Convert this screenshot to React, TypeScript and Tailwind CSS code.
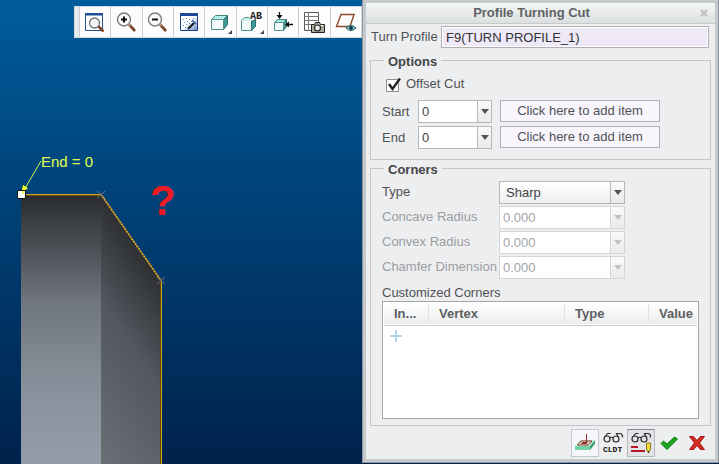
import type { ReactNode } from "react";

const Magnifier = ({ sign }: { sign: "plus" | "minus" }) => (
  <svg width="21" height="20" viewBox="0 0 21 20" fill="none">
    <circle cx="8" cy="7.5" r="6.5" fill="#fafafa" stroke="#777b80" strokeWidth="1.4" />
    <path d={sign === "plus" ? "M5 7.500h6M8 4.500v6" : "M5 7.500h6"} stroke="#111" strokeWidth="2" />
    <path d="M13 12.500l6 6.500" stroke="#7a4028" strokeWidth="2.6" />
    <path d="M12.500 12l2 2" stroke="#c79a7a" strokeWidth="1.5" />
  </svg>
);

const RefitIcon = () => (
  <svg width="20" height="20" viewBox="0 0 20 20" fill="none">
    <path d="M.5 1.500h17v17H.5z" fill="#fff" stroke="#24508e" />
    <path d="M0 1h18v2.500H0z" fill="#1d4f98" />
    <circle cx="9.500" cy="11" r="5" fill="#f4f6f8" stroke="#70757a" strokeWidth="1.3" />
    <path d="M13.500 14.500l5 5" stroke="#7a4028" strokeWidth="2.6" />
  </svg>
);

const RepaintIcon = () => (
  <svg width="20" height="20" viewBox="0 0 20 20" fill="none">
    <defs>
      <linearGradient id="repaint" x1="0.2" y1="0.2" x2="1" y2="1">
        <stop offset="0.4" stopColor="#fff" />
        <stop offset="1" stopColor="#5c86c4" />
      </linearGradient>
    </defs>
    <path d="M1.500 1.500h17v17h-17z" fill="url(#repaint)" stroke="#1d3f86" />
    <path d="M1 1h18v3H1z" fill="#1d4798" />
    <path d="M4 7.500h1M7 6.500h1M10 7.500h1M5 10.500h1M8 9.500h1M12 9.500h1M4 13.500h1M7 12.500h1M10 11.500h1M6 15.500h1M14 6.500h1" stroke="#5a8fc0" />
    <path d="M9 17l6-6" stroke="#15181c" strokeWidth="2.2" />
    <path d="M13 8l4 4" stroke="#2b5faa" strokeWidth="1.5" />
  </svg>
);

const CubeIcon = () => (
  <svg width="24" height="24" viewBox="0 0 24 24" fill="none">
    <path d="M3.500 9.500l4-4h12l-4 4z" fill="#b4f0ea" stroke="#48877f" />
    <path d="M15.500 9.500l4-4v9l-4 5z" fill="#409a98" stroke="#2d6c70" />
    <path d="M3.500 9.500h12v10h-12z" fill="#f0fbfa" stroke="#55918d" />
    <path d="M24 20v4h-4z" fill="#444" />
  </svg>
);

const SavedViewsIcon = () => (
  <svg width="24" height="24" viewBox="0 0 24 24" fill="none">
    <path d="M1.500 10.500l3-3h6v3z" fill="#c2f4ee" />
    <path d="M1.500 11.500h10v9h-10z" fill="#f3fbfa" />
    <path d="M9 7.500H4.500l-3 3v10h10v-10" stroke="#55918d" />
    <path d="M11.500 11.500l4-2v7l-4 4z" fill="#409a98" stroke="#2d6c70" />
    <text x="10" y="9" fontSize="10" fontWeight="bold" fill="#222" fontFamily="Liberation Mono, monospace">AB</text>
    <path d="M24 20v4h-4z" fill="#444" />
  </svg>
);

const OrientIcon = () => (
  <svg width="22" height="22" viewBox="0 0 22 22" fill="none">
    <path d="M2.500 11.500l3-3h9l-3 3z" fill="#9de4df" stroke="#48877f" />
    <path d="M11.500 11.500l3-3v7l-3 4z" fill="#409a98" stroke="#2d6c70" />
    <path d="M2.500 11.500h9v8h-9z" fill="#f0fbfa" stroke="#55918d" />
    <path d="M7.500 1v6M14 13.500h7" stroke="#111" strokeWidth="1.300" />
    <path d="M4.500 4h6l-3 4zM17 10.500v6l-4-3z" fill="#111" />
  </svg>
);

const ViewManagerIcon = () => (
  <svg width="22" height="22" viewBox="0 0 22 22" fill="none">
    <path d="M1.500 1.500h14v18h-14z" fill="#fff" stroke="#555" />
    <path d="M1 5.500h15M1 9.500h15M1 13.500h8M5.500 1v19" stroke="#777" />
    <path d="M8.500 13.500h3l1-2h4l1 2h4v8h-13z" fill="#a9aa9e" stroke="#222" />
    <circle cx="14.500" cy="17" r="3" fill="#e8eeee" stroke="#222" strokeWidth="1.200" />
    <path d="M18 14h2v1h-2z" fill="#fff" />
  </svg>
);

const DatumIcon = () => (
  <svg width="22" height="22" viewBox="0 0 22 22" fill="none">
    <path d="M6 3.500h13l-4 12H1.500z" stroke="#8a492a" strokeWidth="1.400" />
    <path d="M11 17q5-5 10 0q-5 5-10 0z" fill="#8ccaca" stroke="#235c68" />
    <circle cx="16" cy="17" r="2" fill="#143e48" />
  </svg>
);

const Glasses = () => (
  <g stroke="#2c2c2c" strokeWidth="1.200" fill="none">
    <circle cx="5" cy="7" r="3" />
    <circle cx="14" cy="7" r="3" />
    <path d="M7.500 6q2-1.500 4 0M2 6L5.500 1.500h3M16.500 5.500L14.500 1.500h4q2.500 1 2 4" />
  </g>
);

const ToolpathIcon = () => (
  <svg width="22" height="20" viewBox="0 0 22 20" fill="none">
    <path d="M1 13l5-6h15l-5 6z" fill="#c8f5dc" />
    <path d="M1 13h15v4H1z" fill="#74d3a6" />
    <path d="M16 13l5-6v4l-5 6z" fill="#3da579" />
    <path d="M3.500 12l3.500-4h11l-3.500 4zM7.500 10.500l1-1h5l-1 1z" stroke="#9b2822" />
    <path d="M12.500 1v9" stroke="#9b2822" />
  </svg>
);

const ClFileIcon = () => (
  <svg width="22" height="22" viewBox="0 0 22 22">
    <Glasses />
    <text x="1" y="20" fontSize="8" fontWeight="bold" fill="#111" fontFamily="Liberation Mono, monospace">CLDT</text>
  </svg>
);

const PreviewIcon = () => (
  <svg width="22" height="22" viewBox="0 0 22 22">
    <Glasses />
    <path d="M1 14h7v2H1zM1 18h14v2H1z" fill="#b91522" />
    <path d="M16.500 11h4v6l-2 4-2-4z" fill="#f0dc35" stroke="#927321" />
    <path d="M18 19h1v2h-1z" fill="#332" />
  </svg>
);

const CheckIcon = () => (
  <svg width="20" height="16" viewBox="0 0 20 16">
    <path d="M2 8.500L4.500 6L8 9L15.500 2L18.500 4L8 14.500z" fill="#1ca51c" stroke="#0c7d15" />
  </svg>
);

const CrossIcon = () => (
  <svg width="18" height="16" viewBox="0 0 18 16">
    <path d="M1.500 1.500h4L9 5.500l3.500-4h4L11.500 8l5 6.500h-4L9 10.500l-3.500 4h-4l5-6.500z" fill="#d52b21" stroke="#a91912" />
  </svg>
);

const tools: { name: string; icon: ReactNode }[] = [
  { name: "Refit", icon: <RefitIcon /> },
  { name: "Zoom in", icon: <Magnifier sign="plus" /> },
  { name: "Zoom out", icon: <Magnifier sign="minus" /> },
  { name: "Repaint", icon: <RepaintIcon /> },
  { name: "Display style", icon: <CubeIcon /> },
  { name: "Saved views", icon: <SavedViewsIcon /> },
  { name: "Orientation", icon: <OrientIcon /> },
  { name: "View manager", icon: <ViewManagerIcon /> },
  { name: "Datum display", icon: <DatumIcon /> },
];

function Model() {
  return (
    <svg className="absolute inset-0 h-full w-full" fontFamily="Liberation Sans, Arial, sans-serif">
      <defs>
        <linearGradient id="front" gradientUnits="userSpaceOnUse" x1="0" y1="195" x2="0" y2="464">
          <stop offset="0" stopColor="#292b2d" />
          <stop offset="0.2" stopColor="#4d5157" />
          <stop offset="0.4" stopColor="#70767d" />
          <stop offset="0.7" stopColor="#87909a" />
          <stop offset="1" stopColor="#949ca9" />
        </linearGradient>
        <linearGradient id="chamfer" gradientUnits="userSpaceOnUse" x1="101" y1="194" x2="-25" y2="282">
          <stop offset="0" stopColor="#2d2f31" />
          <stop offset="0.4" stopColor="#53575f" />
          <stop offset="1" stopColor="#697075" />
        </linearGradient>
      </defs>
      <rect x="21" y="195" width="80" height="100%" fill="url(#front)" />
      <path d="M101 194L161 280V2000H101z" fill="url(#chamfer)" />
      <path d="M21 195.500H101M160.500 281V2000" stroke="#5c4700" />
      <path d="M21 194.500H101M161.500 281V2000" stroke="#d8a820" />
      <path d="M101 194.500L161 280.500" stroke="#a47318" strokeWidth="1.500" />
      <path d="M101 194.500L161 280.500" stroke="#e0d060" strokeWidth="1.500" strokeDasharray="1 2" />
      <path d="M97 191l8 7M105 191l-8 7M157 277l8 7M165 277l-8 7" stroke="#72747a" />
      <path d="M41 161L24 190" stroke="#d7f04b" />
      <path d="M21 194l2-9 5 3z" fill="#f1ff20" />
      <path d="M17.500 190.500h8v8h-8z" fill="#fff" stroke="#111" />
      <path d="M22 191h3l-3 4z" fill="#f1ff20" />
      <text x="41" y="167" fontSize="15" fill="#e3ff4c">End = 0</text>
      <text x="150" y="215" fontSize="42" fontWeight="bold" fill="#ed1c24">?</text>
    </svg>
  );
}

type ComboProps = { id: string; value: string; className: string; disabled?: boolean; raised?: boolean };

function Combo({ id, value, className, disabled = false, raised = false }: ComboProps) {
  return (
    <div className={`relative h-[23px] ${className}`}>
      <select
        id={id}
        disabled={disabled}
        className={`h-full w-full appearance-none border text-[13px] leading-4 opacity-100 outline-none ${
          raised ? "bg-linear-to-b from-white to-[#eeeff1] pl-[6px]" : "bg-white pl-[3px]"
        } ${disabled ? "border-[#d3d5d7] text-[#a3a5a8]" : "border-[#b5b8ba] text-[#444]"}`}
      >
        <option>{value}</option>
      </select>
      <span
        className={`pointer-events-none absolute inset-y-px right-px flex w-[14px] items-center justify-center border-l bg-linear-to-b from-[#fafafa] to-[#e9eaec] ${
          disabled ? "border-[#d3d5d7] text-[#bfc1c3]" : "border-[#b5b8ba] text-[#515456]"
        }`}
      >
        <svg width="8" height="5" viewBox="0 0 8 5">
          <path d="M0 0h8L4 5z" fill="currentColor" />
        </svg>
      </span>
    </div>
  );
}

const radii = [
  { id: "concave", label: "Concave Radius" },
  { id: "convex", label: "Convex Radius" },
  { id: "chamfer-dim", label: "Chamfer Dimension" },
];

function Group({ title, className, children }: { title: string; className: string; children: ReactNode }) {
  return (
    <fieldset className={`border border-[#c3c6c8] ${className}`}>
      <legend className="ml-[2px] px-1 pt-1 font-bold leading-4 text-[#444648]">{title}</legend>
      {children}
    </fieldset>
  );
}

const column = "p-0 align-middle";
const heading = "block border-l border-[#dddfe0] pl-[10px] leading-[17px]";

function Dialog() {
  return (
    <section
      aria-label="Profile Turning Cut"
      className="mb-px flex w-[357px] shrink-0 flex-col border border-t-0 border-[#8e979e] bg-[#c6c9cc] p-[3px] text-[13px] text-[#505255]"
    >
      <div className="flex flex-1 flex-col bg-[#edeef0]">
        <header className="flex h-[21px] items-center border-b border-[#c8cacc] bg-linear-to-b from-[#f5f6f6] to-[#dcdfe0]">
          <h1 className="flex-1 pl-1 text-center font-bold leading-5 text-[#606366]">Profile Turning Cut</h1>
          <button aria-label="Close" className="flex h-5 w-[22px] items-center justify-center">
            <svg width="8" height="8" viewBox="0 0 8 8">
              <path d="M1 1l6 6M7 1L1 7" stroke="#bcbec0" strokeWidth="2.200" />
            </svg>
          </button>
        </header>
        <div className="flex items-center pt-[2px] pr-[6px] pl-[5px]">
          <label htmlFor="profile" className="w-[70px] leading-[22px]">Turn Profile</label>
          <input
            id="profile"
            readOnly
            value="F9(TURN PROFILE_1)"
            className="h-[22px] min-w-0 flex-1 border border-[#aeb0b3] bg-[#eee8f7] pl-1 text-[#303234] shadow-[inset_0_0_0_1px_white] outline-none"
          />
        </div>

        <div className="px-1">
          <Group title="Options" className="mt-[2px] h-[110px] pr-3 pl-[11px]">
            <label className="mt-[6px] ml-1 flex h-4 w-fit items-center gap-[5px]">
              <input type="checkbox" defaultChecked className="peer sr-only" />
              <svg width="15" height="15" viewBox="0 0 15 15" fill="none">
                <path d="M.5 2.500h12v12H.5z" fill="#fff" stroke="#8d9093" />
                <path d="M3 7l3.500 5L14 1.500" stroke="#222" strokeWidth="2.400" />
              </svg>
              Offset Cut
            </label>
            <div className="mt-2 flex flex-col gap-[3px]">
              {["Start", "End"].map((name) => (
                <div key={name} className="flex h-[23px] items-center">
                  <label htmlFor={name} className="w-9 leading-5">{name}</label>
                  <Combo id={name} value="0" className="w-[74px]" />
                  <button className="mb-[2px] ml-2 h-[22px] w-40 border border-[#aeb0b3] bg-[#f8f5fd] leading-5">
                    Click here to add item
                  </button>
                </div>
              ))}
            </div>
          </Group>

          <Group title="Corners" className="-mt-[2px] pr-[11px] pb-[6px] pl-[11px]">
            <div className="mt-[3px] grid grid-cols-[117px_126px] gap-y-[2px]">
              <label htmlFor="type" className="leading-[22px]">Type</label>
              <Combo id="type" value="Sharp" raised className="w-full" />
              {radii.map(({ id, label }) => (
                <div key={id} className="contents">
                  <label htmlFor={id} className="whitespace-nowrap leading-[22px] text-[#9b9da0]">{label}</label>
                  <Combo id={id} value="0.000" disabled className="w-full" />
                </div>
              ))}
            </div>
            <h2 className="mt-[6px] leading-4">Customized Corners</h2>
            <div className="h-[118px] border border-[#a5a8aa] bg-white p-px">
              <table aria-label="Customized Corners" className="w-full table-fixed border-collapse">
                <thead>
                  <tr className="h-[22px] border-b border-[#c8cacc] bg-linear-to-b from-white to-[#ebecee] text-left text-[#5c5f62]">
                    <th className={`w-[44px] ${column}`}><span className="block pl-[10px]">In...</span></th>
                    <th className={`w-[136px] ${column}`}><span className={heading}>Vertex</span></th>
                    <th className={`w-[84px] ${column}`}><span className={heading}>Type</span></th>
                    <th className={column}><span className={heading}>Value</span></th>
                  </tr>
                </thead>
                <tbody>
                  <tr>
                    <td colSpan={4}>
                      <button aria-label="Add corner" className="mt-1 ml-[6px] block">
                        <svg width="12" height="12" viewBox="0 0 12 12">
                          <path d="M0 6h12M6 0v12" stroke="#aed8ea" strokeWidth="2" />
                        </svg>
                      </button>
                    </td>
                  </tr>
                </tbody>
              </table>
            </div>
          </Group>
        </div>

        <footer className="flex justify-end pt-[3px] pr-1 pb-[2px]">
          <button aria-label="Show toolpath" className="flex h-7 w-7 items-center justify-center border border-[#c3c6cb] bg-[#f7f7fb]"><ToolpathIcon /></button>
          <button aria-label="CL data" className="flex h-7 w-7 items-center justify-center"><ClFileIcon /></button>
          <button aria-label="Preview" className="flex h-7 w-7 items-center justify-center border border-[#b6b8bc] border-t-[#888b90] bg-[#e3e4e8]"><PreviewIcon /></button>
          <button aria-label="Accept" className="flex h-7 w-7 items-center justify-center"><CheckIcon /></button>
          <button aria-label="Cancel" className="flex h-7 w-7 items-center justify-center"><CrossIcon /></button>
        </footer>
      </div>
    </section>
  );
}

export default function App() {
  return (
    <main className="flex min-h-screen bg-linear-to-b from-[#005c9c] to-[#00224c] font-['Liberation_Sans',Arial,sans-serif]">
      <div className="relative min-w-0 flex-1 overflow-hidden">
        <Model />
        <div role="toolbar" aria-label="View" className="relative mt-[6px] ml-auto flex h-8 w-[288px] border border-[#d5dade] bg-[#fdfdfd]">
          <span className="w-1 bg-[#e8eaec]" />
          {tools.map(({ name, icon }) => (
            <button key={name} aria-label={name} className="flex flex-1 items-center justify-center border-l border-[#c9cdd1]">
              {icon}
            </button>
          ))}
        </div>
      </div>
      <Dialog />
    </main>
  );
}
